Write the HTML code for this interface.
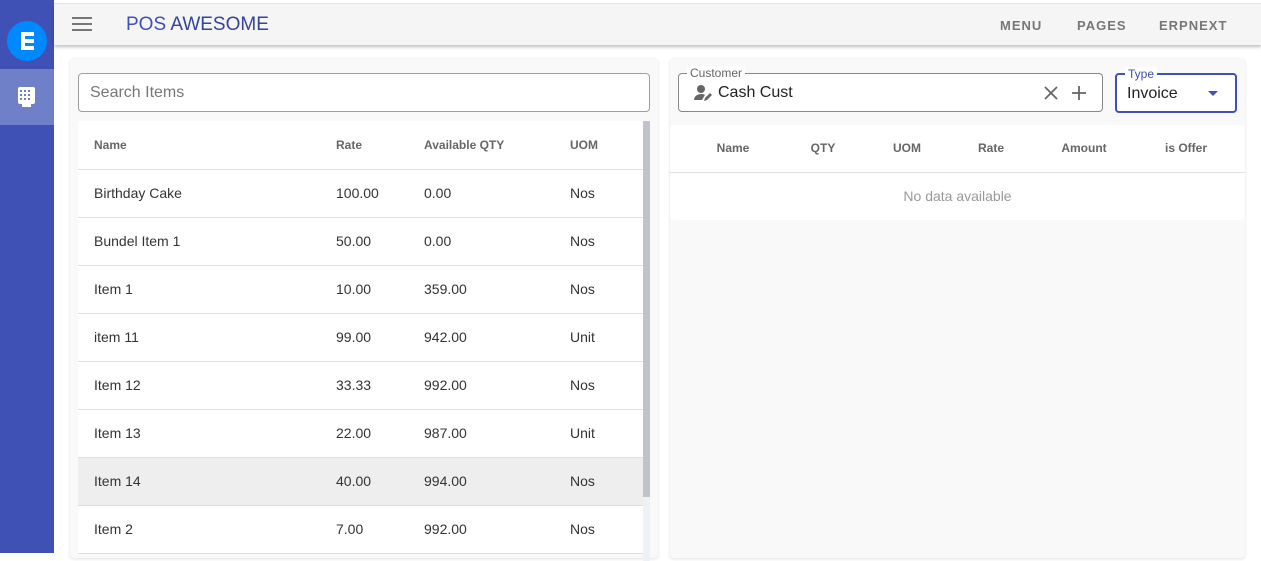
<!DOCTYPE html>
<html><head><meta charset="utf-8"><style>
*{box-sizing:border-box;margin:0;padding:0}
body{width:1261px;height:553px;overflow:hidden;background:#fff;font-family:"Liberation Sans",Roboto,sans-serif;position:relative}
.side{position:absolute;left:0;top:0;width:54px;height:553px;background:#3f51b5}
.logo{position:absolute;left:7px;top:21px;width:40px;height:40px;border-radius:50%;background:#0089ff}
.act{position:absolute;left:0;top:69px;width:54px;height:56px;background:#7080c8}
.hdr{position:absolute;left:54px;top:4px;width:1207px;height:41px;background:#f5f5f5;box-shadow:0 2px 3px rgba(0,0,0,.25)}
.top{position:absolute;left:54px;top:0;width:1207px;height:4px;background:#fff;border-bottom:1px solid #e6e6e6}
.title{position:absolute;left:72px;top:10px;font-size:19px;color:#3f51b5}
.nav{position:absolute;top:14px;font-size:13px;font-weight:bold;color:#777;letter-spacing:1px}
.card{position:absolute;background:#f9f9f9;border-radius:4px;box-shadow:0 1px 3px rgba(0,0,0,.12)}
.inp{position:absolute;border:1px solid #9e9e9e;border-radius:4px;background:#fff}
table{border-collapse:collapse;width:100%}
.lt td,.lt th{text-align:left;padding-left:16px;height:48px;border-bottom:1px solid #e0e0e0;font-size:14px;color:#333}
.lt th{font-size:12px;color:#666;font-weight:bold}
.rh{position:absolute;top:16px;font-size:12px;color:#666;font-weight:bold;transform:translateX(-50%);white-space:nowrap}
</style></head><body>
<div class="side">
<div class="logo"><div style="position:absolute;left:14px;top:11px;width:13px;height:18px;background:#fff"></div><div style="position:absolute;left:18px;top:15px;width:9px;height:3px;background:#0089ff"></div><div style="position:absolute;left:18px;top:22px;width:9px;height:3px;background:#0089ff"></div></div>
<div class="act"><svg style="position:absolute;left:17px;top:18px" width="19" height="20" viewBox="0 0 19 20"><rect x="1" y="0" width="17" height="17" rx="2" fill="#fff"/><rect x="5" y="17" width="9" height="3" fill="#fff"/><g fill="#7080c8"><rect x="3" y="3" width="2" height="2"/><rect x="7" y="3" width="2" height="2"/><rect x="11" y="3" width="2" height="2"/><rect x="3" y="7" width="2" height="2"/><rect x="7" y="7" width="2" height="2"/><rect x="11" y="7" width="2" height="2"/><rect x="3" y="11" width="2" height="2"/><rect x="7" y="11" width="2" height="2"/><rect x="11" y="11" width="2" height="2"/></g></svg></div>
</div>
<div class="top"></div>
<div class="hdr">
<svg style="position:absolute;left:18px;top:13px" width="20" height="14"><g fill="#777"><rect y="0" width="20" height="2"/><rect y="6" width="20" height="2"/><rect y="12" width="20" height="2"/></g></svg>
<div class="title">POS <span style="color:#34449c">AWESOME</span></div>
<div class="nav" style="left:946px">MENU</div>
<div class="nav" style="left:1023px">PAGES</div>
<div class="nav" style="left:1105px">ERPNEXT</div>
</div>
<div class="card" style="left:70px;top:58px;width:588px;height:500px">
<div class="inp" style="left:8px;top:15px;width:572px;height:39px"><span style="position:absolute;left:11px;top:10px;font-size:16px;color:#777">Search Items</span></div>
<div style="position:absolute;left:8px;top:63px;width:565px;background:#fff">
<table class="lt"><tr><th style="width:242px">Name</th><th style="width:88px">Rate</th><th style="width:146px">Available QTY</th><th>UOM</th></tr>
<tr><td>Birthday Cake</td><td>100.00</td><td>0.00</td><td>Nos</td></tr>
<tr><td>Bundel Item 1</td><td>50.00</td><td>0.00</td><td>Nos</td></tr>
<tr><td>Item 1</td><td>10.00</td><td>359.00</td><td>Nos</td></tr>
<tr><td>item 11</td><td>99.00</td><td>942.00</td><td>Unit</td></tr>
<tr><td>Item 12</td><td>33.33</td><td>992.00</td><td>Nos</td></tr>
<tr><td>Item 13</td><td>22.00</td><td>987.00</td><td>Unit</td></tr>
<tr style="background:#eee"><td>Item 14</td><td>40.00</td><td>994.00</td><td>Nos</td></tr>
<tr><td>Item 2</td><td>7.00</td><td>992.00</td><td>Nos</td></tr></table></div>
<div style="position:absolute;left:573px;top:63px;width:7px;height:440px;background:#eef1f5"><div style="width:7px;height:376px;background:#c0c4ca"></div></div>
</div>
<div class="card" style="left:670px;top:58px;width:575px;height:500px">
<div class="inp" style="left:8px;top:15px;width:425px;height:39px;border-color:#888">
<span style="position:absolute;left:8px;top:-8px;background:#fff;padding:0 3px;font-size:12px;color:#666;line-height:14px">Customer</span>
<svg style="position:absolute;left:15px;top:10px" width="20" height="18" viewBox="0 0 20 18"><circle cx="7" cy="5" r="4" fill="#666"/><path d="M0 16c0-4 4-6 7-6 1.5 0 3 .3 4 .8L8 16z" fill="#666"/><path d="M10 17l1-3 5-5 2 2-5 5z" fill="#666"/></svg>
<span style="position:absolute;left:39px;top:10px;font-size:16px;color:#222">Cash Cust</span>
<svg style="position:absolute;left:365px;top:12px" width="14" height="14"><path d="M1 1L13 13M13 1L1 13" stroke="#666" stroke-width="1.8"/></svg>
<svg style="position:absolute;left:392px;top:11px" width="16" height="16"><path d="M8 1V15M1 8H15" stroke="#666" stroke-width="1.8"/></svg>
</div>
<div class="inp" style="left:445px;top:15px;width:122px;height:40px;border:2px solid #3f51b5">
<span style="position:absolute;left:8px;top:-8px;background:#fff;padding:0 3px;font-size:12px;color:#3f51b5;line-height:14px">Type</span>
<span style="position:absolute;left:10px;top:10px;font-size:16px;color:#222">Invoice</span>
<svg style="position:absolute;left:91px;top:16px" width="10" height="5"><path d="M0 0H10L5 5z" fill="#3f51b5"/></svg>
</div>
<div style="position:absolute;left:0;top:67px;width:575px;height:95px;background:#fff;border-radius:4px">
<div style="position:relative;height:48px;border-bottom:1px solid #e0e0e0">
<span class="rh" style="left:63px">Name</span><span class="rh" style="left:153px">QTY</span><span class="rh" style="left:237px">UOM</span><span class="rh" style="left:321px">Rate</span><span class="rh" style="left:414px">Amount</span><span class="rh" style="left:516px">is Offer</span>
</div>
<div style="text-align:center;font-size:14px;color:#999;line-height:46px">No data available</div>
</div>
</div>
</body></html>
